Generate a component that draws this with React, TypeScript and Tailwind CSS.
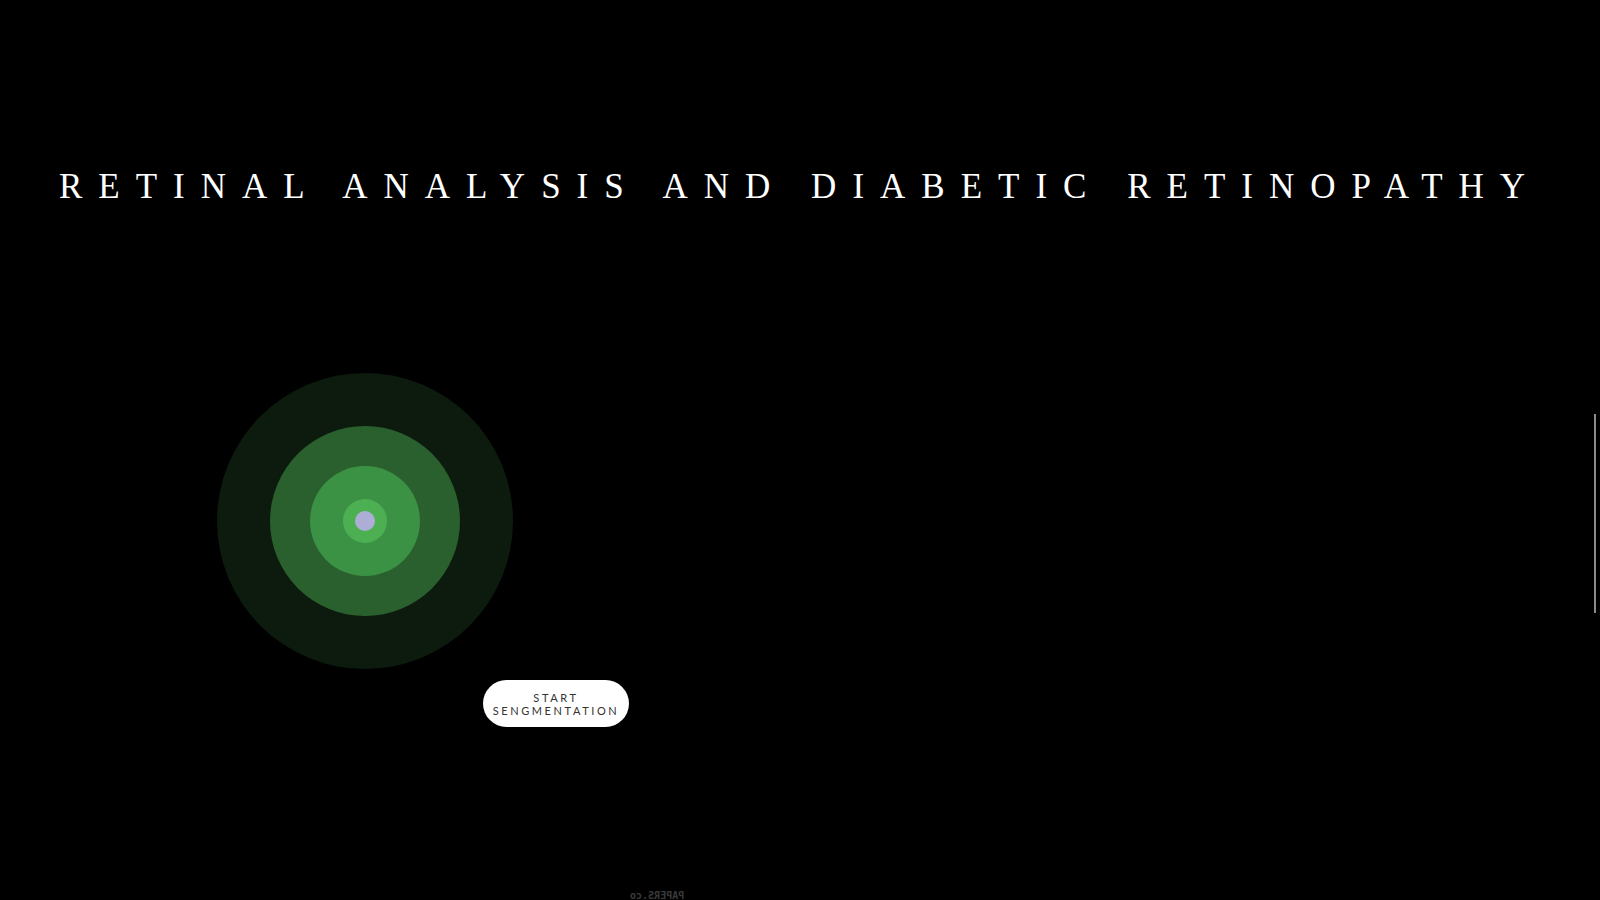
import React from 'react';

const rings = [
  { size: 'w-[296px] h-[296px]', color: 'bg-[#0c1b0d]' },
  { size: 'w-[190px] h-[190px]', color: 'bg-[#2a5f2e]' },
  { size: 'w-[110px] h-[110px]', color: 'bg-[#3b9245]' },
  { size: 'w-[44px] h-[44px]', color: 'bg-[#4cb052]' },
  { size: 'w-[20px] h-[20px]', color: 'bg-[#adaed6]' }
];

const Target: React.FC<{ level: number }> = ({ level }) => {
  const ring = rings[level];
  return (
    <div className={`${ring.size} ${ring.color} rounded-full flex items-center justify-center shrink-0`}>
      {level < rings.length - 1 && <Target level={level + 1} />}
    </div>
  );
};

const App: React.FC = () => {
  return (
    <div className="relative w-full h-[900px] bg-black overflow-hidden">
      {/* Title */}
      <h1
        className="pt-[169px] text-center text-white text-[35px] leading-none tracking-[16px] whitespace-nowrap"
        style={{ fontFamily: '"Liberation Serif", "Times New Roman", serif' }}
      >
        RETINAL ANALYSIS AND DIABETIC RETINOPATHY
      </h1>

      {/* Segmentation target */}
      <div className="mt-[169px] ml-[217px]">
        <Target level={0} />
      </div>

      <div className="mt-[11px] ml-[483px]">
        <button
          className="w-[146px] h-[47px] rounded-full bg-white text-[#333] text-[11px] leading-[13px] tracking-[2.6px] flex flex-col items-center justify-center"
          style={{ fontFamily: 'Lato, "DejaVu Sans", sans-serif' }}
        >
          <span>START</span>
          <span>SENGMENTATION</span>
        </button>
      </div>

      {/* Watermark */}
      <div
        className="absolute left-[630px] top-[891px] -scale-x-100 text-[10px] leading-none font-bold text-[#3a3a3a]"
        style={{ fontFamily: '"DejaVu Sans Mono", monospace' }}
      >
        PAPERS.co
      </div>

      {/* Scroll indicator */}
      <div className="absolute right-[4px] top-[414px] w-[2px] h-[199px] bg-[#8a8a8a]" />
    </div>
  );
};

export default App;
